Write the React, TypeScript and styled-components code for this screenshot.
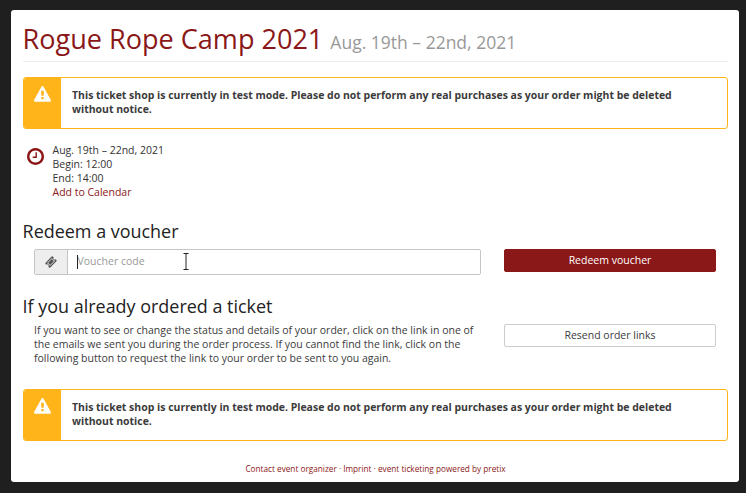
import React from "react";
import styled, { createGlobalStyle } from "styled-components";

const GlobalStyle = createGlobalStyle`
  * { box-sizing: border-box; }
  body {
    margin: 0;
    background: #1f1f1f;
    color: #3b3b3b;
    font: 10.5px/14px "Open Sans", sans-serif;
  }
  a { color: #8b1818; text-decoration: none; }
`;

const Card = styled.main`
  width: 728px;
  height: 472px;
  margin: 10px 0 11px 11px;
  padding: 0 11px 0 12px;
  border-radius: 3px;
  background: #fff;
  display: flex;
  flex-direction: column;
`;

const Header = styled.header`
  height: 52px;
  flex: none;
  padding-top: 10px;
  border-bottom: 1px solid #ededed;
`;

const Title = styled.h1`
  margin: 0 0 0 -0.4px;
  font-size: 27.05px;
  font-weight: 400;
  line-height: 38px;
  color: #8b1818;
  white-space: nowrap;
`;

const TitleDate = styled.small`
  font-size: 17.5px;
  color: #999;
`;

const Alert = styled.div<{ $top: number }>`
  display: flex;
  flex: none;
  height: 52px;
  margin-top: ${(p) => p.$top}px;
  border: 1px solid #ffb419;
  border-radius: 3px;
  overflow: hidden;
`;

const AlertIcon = styled.div`
  width: 37px;
  flex: none;
  padding: 8px 0 0 9.5px;
  background: #ffb419;
  color: #fff;
`;

const AlertText = styled.strong`
  padding: 10px 0 0 11px;
  font-size: 10.48px;
  font-weight: 700;
  white-space: nowrap;
`;

const EventInfo = styled.section`
  display: flex;
  flex: none;
  height: 56px;
  margin-top: 14px;
  color: #333;
`;

const EventIcon = styled.div`
  width: 29.5px;
  padding: 5px 0 0 3.5px;
  color: #8b1818;
`;

const Icon = styled.svg`
  display: block;
  fill: currentColor;
`;

const Line = styled.div`
  white-space: nowrap;
`;

const SectionTitle = styled.h3<{ $top: number }>`
  flex: none;
  margin: ${(p) => p.$top}px 0 0 -0.4px;
  font-size: 17.95px;
  font-weight: 400;
  line-height: 26px;
  color: #222;
`;

const Row = styled.div<{ $top: number; $height: number }>`
  display: grid;
  grid-template-columns: 447px 212px;
  column-gap: 23px;
  align-items: start;
  flex: none;
  height: ${(p) => p.$height}px;
  margin-top: ${(p) => p.$top}px;
  padding-left: 11px;
`;

const InputGroup = styled.div`
  position: relative;
  display: flex;
  height: 26px;
  border: 1px solid #c5c5c5;
  border-radius: 2px;
`;

const Addon = styled.div`
  width: 33px;
  display: flex;
  align-items: center;
  justify-content: center;
  padding-bottom: 1px;
  background: #eee;
  border-right: 1px solid #c5c5c5;
  color: #555;
`;

const Input = styled.input`
  flex: 1;
  min-width: 0;
  border: 0;
  outline: 0;
  padding: 0 9.5px 2px;
  background: transparent;
  font: inherit;
  &::placeholder { color: #999; opacity: 1; }
`;

const Caret = styled.span`
  position: absolute;
  left: 42px;
  top: 5px;
  width: 1px;
  height: 14px;
  background: #222;
`;

const Pointer = styled.svg`
  position: absolute;
  left: 147px;
  top: 3px;
`;

const Button = styled.button<{ $primary?: boolean }>`
  height: 23px;
  padding: 0 0 1px;
  border: 1px solid ${(p) => (p.$primary ? "#8b1818" : "#ccc")};
  border-radius: 2px;
  background: ${(p) => (p.$primary ? "#8b1818" : "#fff")};
  color: ${(p) => (p.$primary ? "#fff" : "#3b3b3b")};
  font: inherit;
`;

const Help = styled.p`
  margin: -1px 0 0;
  white-space: nowrap;
`;

const Footer = styled.footer`
  margin-top: 22px;
  text-align: center;
  font-size: 8.23px;
  line-height: 12px;
  color: #8b1818;
`;

const WARNING =
  "M1024 1375v-190q0-14-9.500-23.500t-22.500-9.500h-192q-13 0-22.500 9.500t-9.500 23.500v190q0 14 9.500 23.500t22.500 9.500h192q13 0 22.500-9.500t9.500-23.500zm-2-374l18-459q0-12-10-19-13-11-24-11h-220q-11 0-24 11-10 7-10 21l17 457q0 10 10 16.500t24 6.500h185q14 0 23.500-6.500t10.500-16.500zm-14-934l768 1408q35 63-2 126-17 29-46.500 46t-63.500 17h-1536q-34 0-63.500-17t-46.500-46q-37-63-2-126l768-1408q17-31 47-49t65-18 65 18 47 49z";
const CLOCK =
  "M896 544v448q0 14-9 23t-23 9h-320q-14 0-23-9t-9-23v-64q0-14 9-23t23-9h224v-352q0-14 9-23t23-9h64q14 0 23 9t9 23zM1312 896q0-148-73-273t-198-198-273-73-273 73-198 198-73 273 73 273 198 198 273 73 273-73 198-198 73-273zM1536 896q0 209-103 385.500t-279.500 279.500-385.500 103-385.500-103-279.500-279.500-103-385.500 103-385.500 279.500-279.500 385.500-103 385.500 103 279.500 279.500 103 385.500z";
const TICKET =
  "M1024 452l316 316-572 572-316-316zM813 1431l618-618q19-19 19-45t-19-45l-362-362q-18-18-45-18t-45 18l-618 618q-19 19-19 45t19 45l362 362q18 18 45 18t45-18zM1702 794l-907 908q-37 37-90.500 37t-90.500-37l-126-126q56-56 56-136t-56-136-136-56-136 56l-125-126q-37-37-37-90.500t37-90.500l907-906q37-37 90.500-37t90.500 37l125 125q-56 56-56 136t56 136 136 56 136-56l126 125q37 37 37 90.500t-37 90.500z";

function TestModeAlert({ top }: { top: number }) {
  return (
    <Alert $top={top}>
      <AlertIcon>
        <Icon width="17" height="17" viewBox="0 0 1792 1792"><path d={WARNING} /></Icon>
      </AlertIcon>
      <AlertText>
        This ticket shop is currently in test mode. Please do not perform any real purchases as your order might be deleted<br />
        without notice.
      </AlertText>
    </Alert>
  );
}

export default function App() {
  return (
    <>
      <GlobalStyle />
      <Card>
        <Header>
          <Title>
            <a href="#">Rogue Rope Camp 2021</a> <TitleDate>Aug. 19th – 22nd, 2021</TitleDate>
          </Title>
        </Header>
        <TestModeAlert top={15} />
        <EventInfo>
          <EventIcon>
            <Icon width="17" height="17" viewBox="0 128 1536 1536"><path d={CLOCK} /></Icon>
          </EventIcon>
          <div>
            <Line>Aug. 19th – 22nd, 2021</Line>
            <Line>Begin: 12:00</Line>
            <Line>End: 14:00</Line>
            <Line><a href="#">Add to Calendar</a></Line>
          </div>
        </EventInfo>
        <SectionTitle $top={19}>Redeem a voucher</SectionTitle>
        <Row $top={5} $height={26}>
          <InputGroup>
            <Addon>
              <Icon width="12" height="12" viewBox="0 0 1792 1792"><path d={TICKET} /></Icon>
            </Addon>
            <Input placeholder="Voucher code" />
            <Caret />
            <Pointer width="8" height="18" viewBox="0 0 8 18" fill="none" stroke="#222">
              <path d="M1.500 .5h5M1.500 16.500h5M4 1v15" />
            </Pointer>
          </InputGroup>
          <Button $primary>Redeem voucher</Button>
        </Row>
        <SectionTitle $top={18}>If you already ordered a ticket</SectionTitle>
        <Row $top={5} $height={42}>
          <Help>
            If you want to see or change the status and details of your order, click on the link in one of<br />
            the emails we sent you during the order process. If you cannot find the link, click on the<br />
            following button to request the link to your order to be sent to you again.
          </Help>
          <Button>Resend order links</Button>
        </Row>
        <TestModeAlert top={23} />
        <Footer>
          <a href="#">Contact event organizer</a> · <a href="#">Imprint</a> · <a href="#">event ticketing powered by pretix</a>
        </Footer>
      </Card>
    </>
  );
}
